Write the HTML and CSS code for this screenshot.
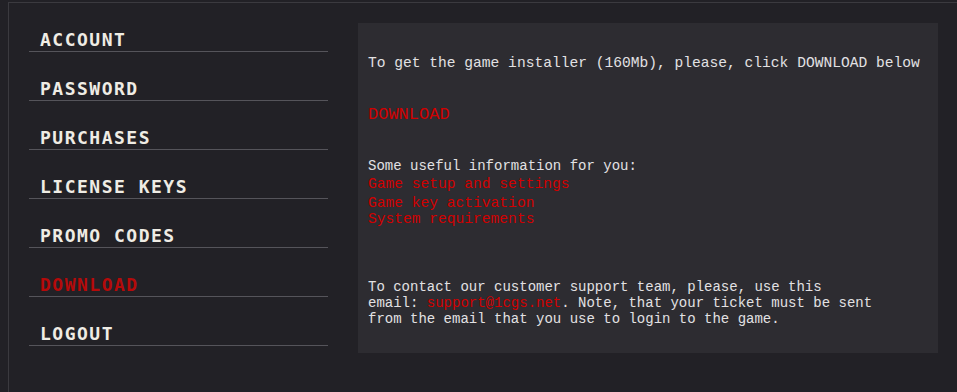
FILE: index.html
```html
<!DOCTYPE html>
<html lang="en">
<head>
    <meta charset="UTF-8">
    <meta name="viewport" content="width=device-width, initial-scale=1.0">
    <title>Account - Download</title>
    <link rel="stylesheet" href="styles.css">
</head>
<body>
    <div class="frame">
        <nav class="side-menu">
            <a href="#" class="menu-item">ACCOUNT</a>
            <a href="#" class="menu-item">PASSWORD</a>
            <a href="#" class="menu-item">PURCHASES</a>
            <a href="#" class="menu-item">LICENSE KEYS</a>
            <a href="#" class="menu-item">PROMO CODES</a>
            <a href="#" class="menu-item active">DOWNLOAD</a>
            <a href="#" class="menu-item">LOGOUT</a>
        </nav>

        <div class="panel">
            <p class="intro">To get the game installer (160Mb), please, click DOWNLOAD below</p>
            <a href="#" class="download-link">DOWNLOAD</a>

            <p class="info-title">Some useful information for you:</p>
            <a href="#" class="info-link first">Game setup and settings</a>
            <a href="#" class="info-link second">Game key activation</a>
            <a href="#" class="info-link third">System requirements</a>

            <p class="contact">
                To contact our customer support team, please, use this<br>
                email: <a href="#" class="mail">support@1cgs.net</a>. Note, that your ticket must be sent<br>
                from the email that you use to login to the game.
            </p>
        </div>
    </div>
</body>
</html>
```

FILE: styles.css
```css
:root {
    --bg-color: #222126;
    --panel-color: #2d2c31;
    --frame-color: #3b3a3f;
    --line-color: #55545a;
    --menu-text: #efece4;
    --text-color: #e2e1e3;
    --link-color: #d20000;
    --active-color: #b50a0a;
}

* {
    margin: 0;
    padding: 0;
    box-sizing: border-box;
}

html, body {
    height: 100%;
}

body {
    background-color: var(--bg-color);
    font-family: 'Liberation Mono', monospace;
    color: var(--text-color);
    overflow: hidden;
}

a {
    text-decoration: none;
}

.frame {
    margin: 2px 0 0 8px;
    height: calc(100% - 2px);
    border-top: 1px solid var(--frame-color);
    border-left: 1px solid var(--frame-color);
    padding-left: 20px;
    display: flex;
    align-items: flex-start;
    gap: 30px;
}

/* menu */
.side-menu {
    width: 299px;
    display: flex;
    flex-direction: column;
}

.menu-item {
    display: block;
    padding: 26px 0 0 11px;
    border-bottom: 1px solid var(--line-color);
    font-family: 'DejaVu Sans Mono', monospace;
    font-weight: 700;
    font-size: 18px;
    line-height: 22px;
    letter-spacing: 1.5px;
    color: var(--menu-text);
}

.menu-item.active {
    color: var(--active-color);
}

/* content */
.panel {
    margin-top: 20px;
    width: 580px;
    background-color: var(--panel-color);
    padding: 32px 10px 26px;
    font-size: 14px;
    line-height: 16px;
}

.intro {
    font-size: 14.6px;
    line-height: 17px;
}

.download-link {
    display: block;
    margin-top: 33px;
    font-size: 17px;
    line-height: 20px;
    color: var(--link-color);
}

.info-title {
    margin-top: 33px;
}

.info-link {
    display: block;
    font-size: 14.6px;
    line-height: 16px;
    color: var(--link-color);
}

.info-link.first { margin-top: 2px; }
.info-link.second { margin-top: 3px; }

.contact {
    margin-top: 52px;
}

.mail {
    color: var(--link-color);
}
```
